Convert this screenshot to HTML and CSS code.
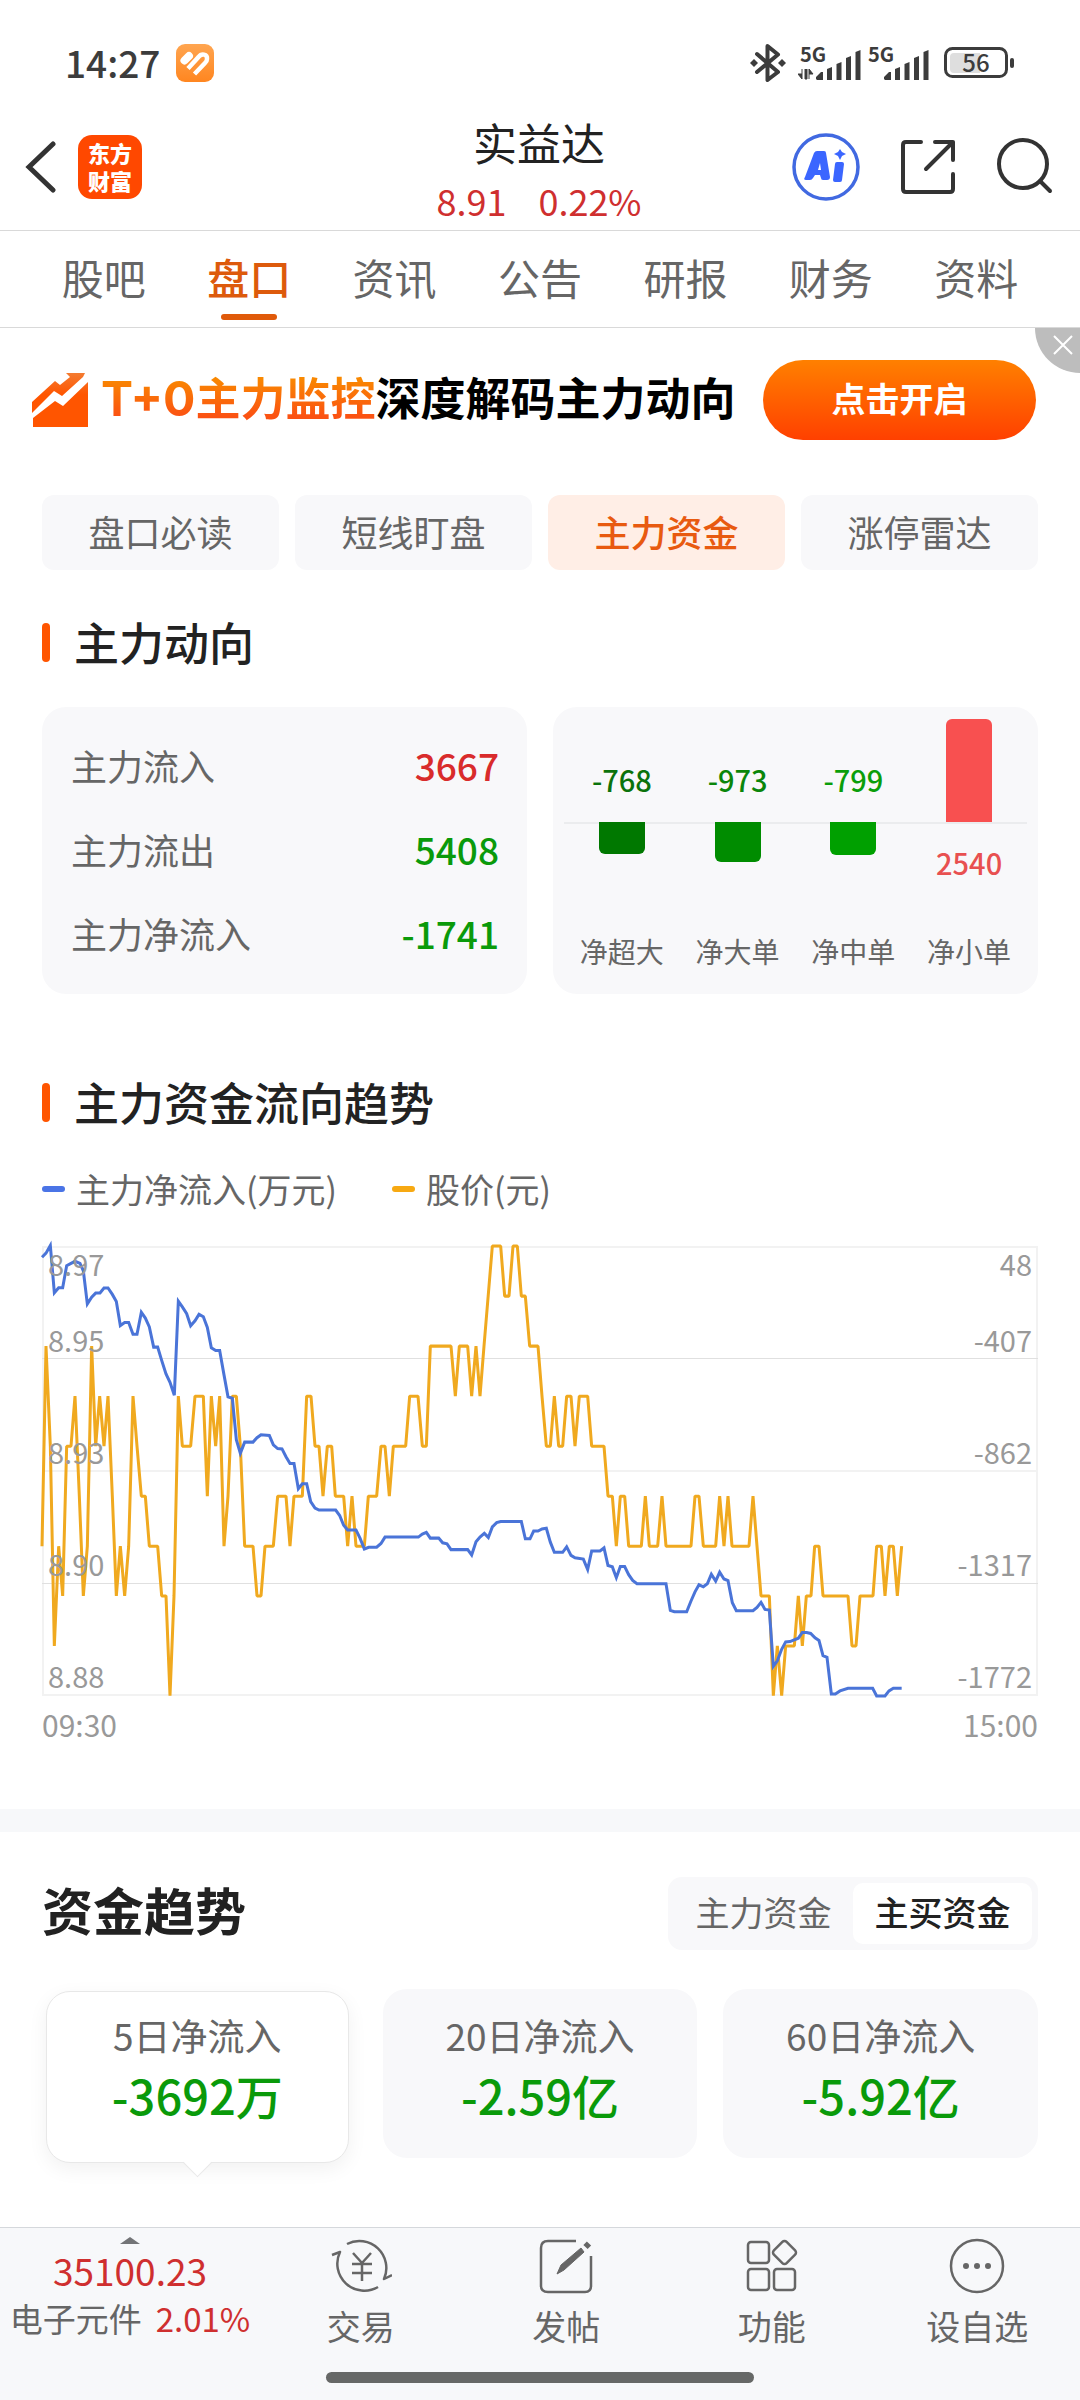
FILE: index.html
```html
<!DOCTYPE html>
<html lang="zh-CN">
<head>
<meta charset="utf-8">
<meta name="viewport" content="width=device-width, initial-scale=1">
<title>实益达 8.91 0.22%</title>
<link rel="stylesheet" href="styles.css">
</head>
<body>
<div class="status">
  <span class="status-time">14:27</span>
  <svg class="status-app" viewBox="0 0 38 38" width="38" height="38" aria-hidden="true">
    <defs><linearGradient id="app" x1="0" y1="0" x2="0" y2="1"><stop offset="0" stop-color="#ffa550"/><stop offset="1" stop-color="#ff8620"/></linearGradient></defs>
    <rect width="38" height="38" rx="9" fill="url(#app)"/>
    <path d="M8.500 16.500 13 12" stroke="#fff" stroke-width="8" stroke-linecap="round" fill="none"/>
    <path d="M12 24.500 22.500 13c3-4 9-3 8.500 2 0 2-1 3-2 4L18.500 30" fill="none" stroke="#fff" stroke-width="4.500"/>
    <path d="M15.500 27.500 25.500 16.500" fill="none" stroke="#ff9438" stroke-width="1.500"/>
  </svg>
  <span class="status-icons">
    <svg viewBox="0 0 36 40" width="36" height="40" aria-label="蓝牙">
      <path d="M7 11 28 29 17.500 37V3L28 11.500 7 29" fill="none" stroke="#3c3c3c" stroke-width="4" stroke-linejoin="round" stroke-linecap="round"/>
      <path d="M0 20l4-4 4 4-4 4zM28 20l4-4 4 4-4 4z" fill="#3c3c3c"/>
    </svg>
    <svg class="signal" viewBox="0 -8 64 52" width="64" height="52" aria-label="5G">
      <text x="2" y="17">5G</text>
      <path d="M4 24v10l-4-5h4M7 24v10h2V24M11 34V24l4 5h-4" stroke="#3c3c3c" stroke-width="1" fill="#3c3c3c"/>
      <path d="M18 34v-2l5-5h2v8h-6zM29 35V24l5-2v13zM38.500 35V19l5-2v18zM48 35V13l5-2v24zM57.500 35V7l5-2v30z" fill="#3c3c3c"/>
    </svg>
    <svg class="signal" viewBox="0 -8 64 52" width="64" height="52" aria-label="5G">
      <text x="2" y="17">5G</text>
      <path d="M18 34v-2l5-5h2v8h-6zM29 35V24l5-2v13zM38.500 35V19l5-2v18zM48 35V13l5-2v24zM57.500 35V7l5-2v30z" fill="#3c3c3c"/>
    </svg>
    <svg class="battery" viewBox="0 -6 72 44" width="72" height="44" aria-label="电量 56%">
      <rect x="1.500" y="1.500" width="61" height="28" rx="7" fill="#fff" stroke="#3c3c3c" stroke-width="3"/>
      <path d="M10 6h26v20H10a4 4 0 0 1-4-4V10a4 4 0 0 1 4-4z" fill="#dedede"/>
      <rect x="66" y="11" width="4" height="10" rx="2" fill="#3c3c3c"/>
      <text x="32" y="25" text-anchor="middle">56</text>
    </svg>
  </span>
</div>

<header class="header">
  <div class="header-left">
    <button class="icon-btn" aria-label="返回">
      <svg viewBox="0 0 32 54" width="32" height="54"><path d="M29 4 5 27 29 50" fill="none" stroke="#333" stroke-width="5" stroke-linecap="round"/></svg>
    </button>
    <a class="logo" href="#home">东方财富</a>
  </div>
  <div class="header-title">
    <h1>实益达</h1>
    <p><span>8.91</span><span>0.22%</span></p>
  </div>
  <div class="header-right">
    <button class="icon-btn" aria-label="AI">
      <svg viewBox="0 0 68 68" width="68" height="68">
        <circle cx="34" cy="34" r="32" fill="none" stroke="#4169e1" stroke-width="3.500"/>
        <path fill="#3b66ff" fill-rule="evenodd" d="M22 20q1-2 3-2h7q2 0 2 2l4 24q0 3-3 3h-4q-2 0-2-2l-1-3h-5l-2 3q-1 2-3 2h-4q-3 0-1-3zM26 37h3l-1-7zM43 31q0-2 2-2h5q2 0 2 2l-2 16q0 2-2 2h-5q-2 0-2-2zM48 16l2 3 4 2-4 2-2 4-2-4-4-2 4-2z"/>
      </svg>
    </button>
    <button class="icon-btn" aria-label="分享">
      <svg viewBox="0 0 56 56" width="56" height="56" fill="none" stroke="#333" stroke-width="4" stroke-linecap="round" stroke-linejoin="round"><path d="M21 3H6Q3 3 3 6v44q0 3 3 3h44q3 0 3-3V35M35 3h18v18M53 3 26 30"/></svg>
    </button>
    <button class="icon-btn" aria-label="搜索">
      <svg viewBox="0 0 58 58" width="58" height="58" fill="none" stroke="#333" stroke-width="4" stroke-linecap="round"><circle cx="27" cy="26" r="24"/><path d="M44 43 54 53"/></svg>
    </button>
  </div>
</header>

<nav class="tabs">
  <a href="#guba">股吧</a>
  <a href="#pankou" class="active" aria-current="page">盘口</a>
  <a href="#zixun">资讯</a>
  <a href="#gonggao">公告</a>
  <a href="#yanbao">研报</a>
  <a href="#caiwu">财务</a>
  <a href="#ziliao">资料</a>
</nav>

<main>
  <aside class="banner">
    <svg class="banner-icon" viewBox="0 0 58 56" width="58" height="56" aria-hidden="true">
      <defs><linearGradient id="rise" x1="0" y1="0" x2="0" y2="1"><stop offset="0" stop-color="#f47b30"/><stop offset=".4" stop-color="#ff5500"/></linearGradient></defs>
      <path fill="url(#rise)" d="M1 41V30L24 9l5 4 10-8-4-4h19l-2 4-21 19-8-5zM2 55v-9l22-17 8 5L57 10v45z"/>
    </svg>
    <p class="banner-text"><span class="banner-hot"><span class="latin">T+0</span>主力监控</span>深度解码主力动向</p>
    <button class="banner-cta">点击开启</button>
    <button class="banner-close" aria-label="关闭">
      <svg viewBox="0 0 20 20" width="20" height="20"><path d="M1 1 19 19M19 1 1 19" stroke="#fff" stroke-width="2"/></svg>
    </button>
  </aside>

  <div class="content">
    <div class="pills">
      <button>盘口必读</button>
      <button>短线盯盘</button>
      <button class="active">主力资金</button>
      <button>涨停雷达</button>
    </div>

    <section>
      <h2 class="section-title">主力动向</h2>
      <div class="flow">
        <dl class="card flow-list">
          <div><dt>主力流入</dt><dd class="up">3667</dd></div>
          <div><dt>主力流出</dt><dd class="down">5408</dd></div>
          <div><dt>主力净流入</dt><dd class="down">-1741</dd></div>
        </dl>
        <div class="card bars">
          <div class="bar-col super"><div class="bar-top"><b>-768</b></div><div class="bar-bottom"><i style="height:32px"></i></div><span>净超大</span></div>
          <div class="bar-col large"><div class="bar-top"><b>-973</b></div><div class="bar-bottom"><i style="height:40px"></i></div><span>净大单</span></div>
          <div class="bar-col medium"><div class="bar-top"><b>-799</b></div><div class="bar-bottom"><i style="height:33px"></i></div><span>净中单</span></div>
          <div class="bar-col small"><div class="bar-top"><i style="height:104px"></i></div><div class="bar-bottom"><b>2540</b></div><span>净小单</span></div>
        </div>
      </div>
    </section>

    <section class="trend">
      <h2 class="section-title">主力资金流向趋势</h2>
      <div class="legend"><span class="inflow">主力净流入(万元)</span><span class="price">股价(元)</span></div>
      <svg class="chart" viewBox="0 0 996 456" role="img" aria-label="主力资金流向趋势">
        <g fill="none" stroke="#f2f2f2" stroke-width="2">
          <path d="M1 7H995V455H1zM1 231H995"/>
        </g>
        <path d="M0 118.500H996M0 343.500H996" stroke="#e0e0e0" stroke-width="1"/>
        <g fill="none" stroke-width="9" transform="scale(.333333 .338) translate(-36 -59)">
          <polyline stroke="#f0a91f" stroke-linejoin="bevel" points="36,965 48,373 61,669 73,1260 86,965 98,1112 110,669 123,669 135,521 148,817 160,1112 172,965 185,373 197,669 209,521 222,669 234,521 247,817 259,1112 271,965 284,1112 296,965 309,521 321,669 334,817 346,817 358,965 383,965 395,1112 408,1112 420,1407 432,1112 445,521 457,669 482,669 495,521 520,521 532,817 544,521 557,669 569,521 582,965 594,817 607,521 619,521 631,669 644,965 669,965 681,1112 693,1112 705,965 730,965 743,817 768,817 780,965 792,817 817,817 830,521 843,521 855,669 867,669 879,817 892,669 905,669 916,817 941,817 953,965 966,817 978,965 1003,965 1015,817 1040,817 1053,669 1065,669 1078,817 1090,669 1127,669 1139,521 1164,521 1177,669 1189,669 1201,373 1263,373 1276,521 1288,373 1313,373 1325,521 1338,373 1350,521 1362,373 1387,77 1412,77 1424,225 1437,225 1449,77 1462,77 1474,225 1486,225 1499,373 1524,373 1536,521 1549,669 1561,669 1573,521 1586,669 1598,669 1610,521 1623,521 1635,669 1648,521 1673,521 1685,669 1722,669 1734,817 1747,817 1759,965 1771,817 1784,817 1796,965 1834,965 1846,817 1858,965 1883,965 1896,817 1908,965 1983,965 1995,817 2007,817 2020,965 2057,965 2069,817 2082,965 2094,817 2106,965 2157,965 2169,817 2181,965 2193,1112 2218,1112 2230,1407 2242,1260 2255,1407 2267,1260 2293,1260 2305,1112 2317,1260 2329,1112 2343,1112 2354,965 2367,965 2379,1112 2454,1112 2466,1260 2478,1260 2490,1112 2529,1112 2540,965 2554,965 2565,1112 2578,965 2590,965 2602,1112 2615,965"/>
          <polyline stroke="#4a74d8" points="36,110 48,98 61,75 73,215 86,200 98,200 110,135 135,122 150,128 160,150 172,248 185,228 197,216 210,216 222,201 234,201 247,220 259,241 271,312 284,303 296,303 309,338 321,338 334,273 346,290 358,316 371,376 383,376 395,415 408,455 420,480 433,518 445,240 457,257 470,277 482,313 495,298 507,279 520,286 532,318 544,378 557,386 569,386 582,458 594,523 607,527 619,650 631,690 644,657 669,657 681,644 693,635 718,637 730,665 743,676 756,677 768,700 780,720 792,720 805,795 817,780 830,780 842,833 855,852 867,858 917,858 929,874 941,903 953,917 978,917 990,941 1003,973 1016,968 1040,968 1053,957 1065,938 1165,938 1177,929 1189,924 1201,941 1226,941 1238,955 1251,958 1263,975 1313,975 1325,991 1338,952 1350,938 1363,927 1375,939 1387,908 1400,895 1412,892 1474,892 1486,943 1500,943 1511,920 1524,920 1536,914 1549,912 1561,953 1573,983 1598,983 1610,967 1623,992 1635,999 1660,1003 1673,1034 1685,979 1710,979 1722,970 1734,1022 1747,1026 1759,1058 1771,1025 1784,1025 1796,1049 1808,1066 1821,1076 1908,1076 1921,1155 1933,1159 1970,1159 1983,1127 1995,1100 2007,1079 2020,1085 2032,1076 2044,1048 2057,1068 2069,1042 2082,1062 2094,1067 2107,1132 2119,1156 2169,1156 2181,1146 2193,1131 2205,1152 2218,1154 2230,1320 2242,1304 2255,1270 2267,1248 2280,1247 2305,1237 2317,1220 2330,1220 2342,1223 2355,1236 2367,1244 2379,1289 2391,1294 2404,1402 2416,1402 2430,1393 2454,1385 2528,1385 2540,1408 2565,1408 2577,1393 2590,1385 2615,1385"/>
        </g>
        <g class="axis">
          <text x="6" y="36">8.97</text><text x="6" y="112">8.95</text><text x="6" y="224">8.93</text><text x="6" y="336">8.90</text><text x="6" y="448">8.88</text>
        </g>
        <g class="axis axis-right">
          <text x="990" y="36">48</text><text x="990" y="112">-407</text><text x="990" y="224">-862</text><text x="990" y="336">-1317</text><text x="990" y="448">-1772</text>
        </g>
      </svg>
      <div class="times"><span>09:30</span><span>15:00</span></div>
    </section>
  </div>

  <section class="content capital">
    <div class="capital-head">
      <h2>资金趋势</h2>
      <div class="segmented"><button>主力资金</button><button class="active">主买资金</button></div>
    </div>
    <div class="periods">
      <button class="period active"><span>5日净流入</span><b>-3692万</b></button>
      <button class="period"><span>20日净流入</span><b>-2.59亿</b></button>
      <button class="period"><span>60日净流入</span><b>-5.92亿</b></button>
    </div>
  </section>
</main>

<footer class="footer">
  <nav class="toolbar">
    <a class="quote" href="#sector">
      <svg viewBox="0 0 20 7" width="20" height="7" aria-hidden="true"><path d="M0 7 10 0 20 7z" fill="#737477"/></svg>
      <strong>35100.23</strong>
      <span>电子元件<em>2.01%</em></span>
    </a>
    <a class="tool" href="#trade">
      <svg viewBox="0 0 62 58" width="62" height="58"><path d="M17 7A27 27 0 0 1 54 42l8-4M48 50A27 27 0 0 1 10 15L2 18M23 16l9 10 9-10M32 26v18M22 27h20M22 36h20"/></svg>
      交易</a>
    <a class="tool" href="#post">
      <svg viewBox="0 0 62 58" width="62" height="58"><path d="M41 4H13q-7 0-7 7v38q0 6 7 6h37q6 0 6-6V19"/><path d="M22 37l4-9L46 11l3 4L29 33z" fill="#666" stroke-width="1"/><path d="M50.500 10 54 6.500" stroke-width="6"/></svg>
      发帖</a>
    <a class="tool" href="#functions">
      <svg viewBox="0 0 62 58" width="62" height="58"><rect x="7" y="5" width="21" height="21" rx="3"/><rect x="7" y="32" width="21" height="21" rx="3"/><rect x="33" y="32" width="21" height="21" rx="3"/><rect x="34.500" y="6.500" width="18" height="18" rx="3" transform="rotate(45 43.500 15.500)"/></svg>
      功能</a>
    <a class="tool" href="#watchlist">
      <svg viewBox="0 0 62 58" width="62" height="58"><circle cx="31" cy="29" r="26"/><g fill="#666" stroke="none"><circle cx="20" cy="29" r="3"/><circle cx="31" cy="29" r="3"/><circle cx="42" cy="29" r="3"/></g></svg>
      设自选</a>
  </nav>
  <div class="home-bar"></div>
</footer>
</body>
</html>
```
FILE: styles.css
```css
* { box-sizing: border-box; margin: 0; padding: 0; }

body {
  min-height: 100vh;
  display: flex;
  flex-direction: column;
  background: #fff;
  color: #222;
  font-family: "Noto Sans CJK SC", "Noto Sans", sans-serif;
}

button { border: 0; background: none; font: inherit; color: inherit; }
a { color: inherit; text-decoration: none; }
svg { display: block; flex: none; }
b, i, em, strong { font-style: normal; font-weight: 500; }

/* Status bar */
.status {
  height: 104px;
  padding: 22px 64px 0 65px;
  display: flex;
  align-items: center;
  color: #3c3c3c;
}
.status-time { font-size: 37px; font-weight: 500; line-height: 48px; padding-bottom: 2px; }
.status-app { margin-left: 16px; }
.status-icons { margin-left: auto; display: flex; align-items: center; gap: 4px; }
.status-icons svg:first-child { margin-right: 8px; }
.signal text { font-size: 20px; font-weight: 700; fill: #3c3c3c; }
.battery { margin-left: 10px; }
.battery text { font-size: 24px; font-weight: 500; fill: #3c3c3c; }

/* Header */
.header {
  height: 127px;
  padding: 0 26px 0 24px;
  display: grid;
  grid-template-columns: 1fr auto 1fr;
  align-items: center;
  border-bottom: 1px solid #d9d9d9;
}
.header-left { display: flex; align-items: center; gap: 22px; }
.header-right { display: flex; align-items: center; justify-content: flex-end; gap: 40px; }
.logo {
  width: 64px;
  height: 64px;
  padding: 3px 10px;
  border-radius: 14px;
  background: #ff4800;
  color: #fff;
  font-size: 22px;
  font-weight: 900;
  line-height: 28px;
}
.header-title { text-align: center; padding-top: 6px; }
.header-title h1 { font-size: 44px; font-weight: 400; line-height: 60px; }
.header-title p {
  display: flex;
  justify-content: center;
  gap: 32px;
  font-size: 36px;
  line-height: 56px;
  color: #cf2f2f;
}

/* Page tabs */
.tabs {
  height: 97px;
  padding: 0 31px;
  display: flex;
  border-bottom: 1px solid #d9d9d9;
  font-size: 42px;
  line-height: 92px;
  color: #666;
}
.tabs a { flex: 1; text-align: center; position: relative; }
.tabs .active { color: #dd5a0c; font-weight: 500; }
.tabs .active::after {
  content: "";
  position: absolute;
  left: 50%;
  bottom: 7px;
  width: 56px;
  height: 6px;
  margin-left: -28px;
  border-radius: 3px;
  background: #e05a0a;
}

main { flex: 1; }

/* Promotion banner */
.banner {
  position: relative;
  height: 144px;
  padding: 0 44px 0 31px;
  display: flex;
  align-items: center;
  overflow: hidden;
}
.banner-text {
  margin-left: 12px;
  font-size: 45px;
  font-weight: 700;
  line-height: 64px;
  color: #000;
  padding-bottom: 4px;
  white-space: nowrap;
}
.banner-hot {
  background: linear-gradient(#f98a00 20%, #fb5212 80%);
  -webkit-background-clip: text;
  background-clip: text;
  color: transparent;
}
.latin { font-family: Inter, sans-serif; font-size: 48px; }
.banner-cta {
  margin-left: auto;
  width: 273px;
  height: 80px;
  border-radius: 40px;
  background: linear-gradient(#ff8000, #ff4000);
  color: #fff;
  font-size: 34px;
  font-weight: 700;
  line-height: 76px;
  padding-bottom: 4px;
}
.banner-close {
  position: absolute;
  top: 0;
  right: 0;
  width: 45px;
  height: 45px;
  border-bottom-left-radius: 45px;
  background: #bdbdbd;
  padding: 7px 7px 18px 18px;
}

/* Content */
.content { padding: 0 42px; }
.pills { padding-top: 23px; display: grid; grid-template-columns: repeat(4, 1fr); gap: 16px; }
.pills button {
  height: 75px;
  padding-bottom: 4px;
  border-radius: 12px;
  background: #f8f8fa;
  color: #666;
  font-size: 36px;
}
.pills .active { background: #ffeee6; color: #e85a10; font-weight: 500; }

.section-title {
  margin-top: 40px;
  display: flex;
  align-items: center;
  gap: 24px;
  font-size: 45px;
  font-weight: 500;
  line-height: 64px;
}
.section-title::before {
  content: "";
  width: 8px;
  height: 39px;
  border-radius: 4px;
  background: #ff5500;
}
.flow { margin-top: 33px; display: grid; grid-template-columns: 1fr 1fr; gap: 26px; }
.card { height: 287px; border-radius: 24px; background: #f8f8fa; }
.flow-list { padding: 16px 28px 18px 29px; }
.flow-list div { display: flex; justify-content: space-between; line-height: 84px; }
.flow-list dt { font-size: 36px; color: #666; }
.flow-list dd { font-size: 37px; font-weight: 500; }
.up { color: #d92b2b; }
.down { color: #0a9a0a; }

.bars { padding: 10px 11px 0; display: flex; }
.bar-col { flex: 1; display: flex; flex-direction: column; align-items: center; }
.bar-col b { font-size: 29px; line-height: 40px; }
.bar-col i { width: 46px; }
.bar-top {
  width: 100%;
  height: 105px;
  display: flex;
  flex-direction: column;
  align-items: center;
  justify-content: flex-end;
}
.bar-top b { margin-bottom: 23px; }
.bar-top i { border-radius: 6px 6px 0 0; }
.bar-bottom {
  width: 100%;
  height: 105px;
  display: flex;
  justify-content: center;
  align-items: flex-start;
  border-top: 2px solid #ebecee;
}
.bar-bottom i { margin-top: -2px; border-radius: 0 0 6px 6px; }
.bar-bottom b { margin-top: 18px; }
.bar-col span { font-size: 28px; line-height: 48px; color: #666; }
.super b { color: #0b720b; }
.super i { background: #007800; }
.large b { color: #0a860a; }
.large i { background: #008c00; }
.medium b { color: #0a9e0a; }
.medium i { background: #00a000; }
.small b { color: #e85050; }
.small .bar-top i { background: #f85050; margin-bottom: -1px; }

/* Trend chart */
.trend { padding-top: 36px; }
.legend { margin-top: 31px; display: flex; gap: 55px; font-size: 34px; line-height: 48px; color: #666; }
.legend span { display: flex; align-items: center; gap: 11px; }
.legend span::before { content: ""; width: 23px; height: 6px; border-radius: 3px; background: #4a74e6; }
.legend .price::before { background: #f7a912; }
.chart { margin-top: 27px; width: 100%; height: auto; overflow: visible; }
.axis text { font-size: 29px; fill: #999; }
.axis-right { text-anchor: end; }
.times { margin-top: 8px; display: flex; justify-content: space-between; font-size: 30px; line-height: 40px; color: #999; }

/* Capital trend */
.capital { margin-top: 65px; border-top: 23px solid #f7f8fa; padding-bottom: 48px; }
.capital-head { height: 73px; margin-top: 45px; display: flex; align-items: center; justify-content: space-between; }
.capital-head h2 { font-size: 51px; font-weight: 700; line-height: 60px; padding-bottom: 10px; }
.segmented { height: 73px; padding: 6px; display: flex; border-radius: 14px; background: #f8f8fa; font-size: 34px; }
.segmented button { width: 179px; height: 61px; padding-bottom: 4px; border-radius: 10px; color: #666; }
.segmented .active { background: #fff; color: #222; font-weight: 500; }
.periods { margin-top: 39px; display: grid; grid-template-columns: repeat(3, 1fr); gap: 26px; align-items: start; }
.period {
  height: 169px;
  border-radius: 24px;
  background: #f8f8fa;
  display: flex;
  flex-direction: column;
  align-items: center;
  padding-top: 20px;
}
.period span { font-size: 37px; line-height: 52px; color: #666; }
.period b { font-size: 47px; line-height: 68px; color: #0a9a0a; }
.period.active {
  position: relative;
  height: 172px;
  margin: 2px 8px 0 4px;
  padding-top: 17px;
  background: #fff;
  border: 1px solid #e8e8e8;
  box-shadow: 0 6px 20px rgba(0, 0, 0, .06);
}
.period.active::after {
  content: "";
  position: absolute;
  left: 50%;
  bottom: -11px;
  width: 20px;
  height: 20px;
  margin-left: -10px;
  background: linear-gradient(135deg, transparent 50%, #fff 50%);
  border-right: 1px solid #e8e8e8;
  border-bottom: 1px solid #e8e8e8;
  transform: rotate(45deg);
}

/* Bottom bar */
.footer { border-top: 1px solid #d5d8dc; background: #f7f8fa; padding-bottom: 17px; }
.toolbar { display: grid; grid-template-columns: 258px repeat(4, 1fr); height: 144px; color: #666; }
.quote { padding: 9px 0 0 2px; display: flex; flex-direction: column; align-items: center; white-space: nowrap; }
.quote strong { font-size: 37px; font-weight: 400; line-height: 52px; color: #cf2f2f; }
.quote span { display: flex; gap: 14px; font-size: 33px; line-height: 44px; }
.quote em { font-weight: 400; color: #cf2f2f; }
.tool { padding-top: 9px; display: flex; flex-direction: column; align-items: center; font-size: 34px; line-height: 62px; }
.tool svg { fill: none; stroke: #666; stroke-width: 2.500px; stroke-linejoin: round; }
.home-bar { width: 428px; max-width: 60%; height: 11px; margin: 0 auto; border-radius: 6px; background: #666867; }
```
